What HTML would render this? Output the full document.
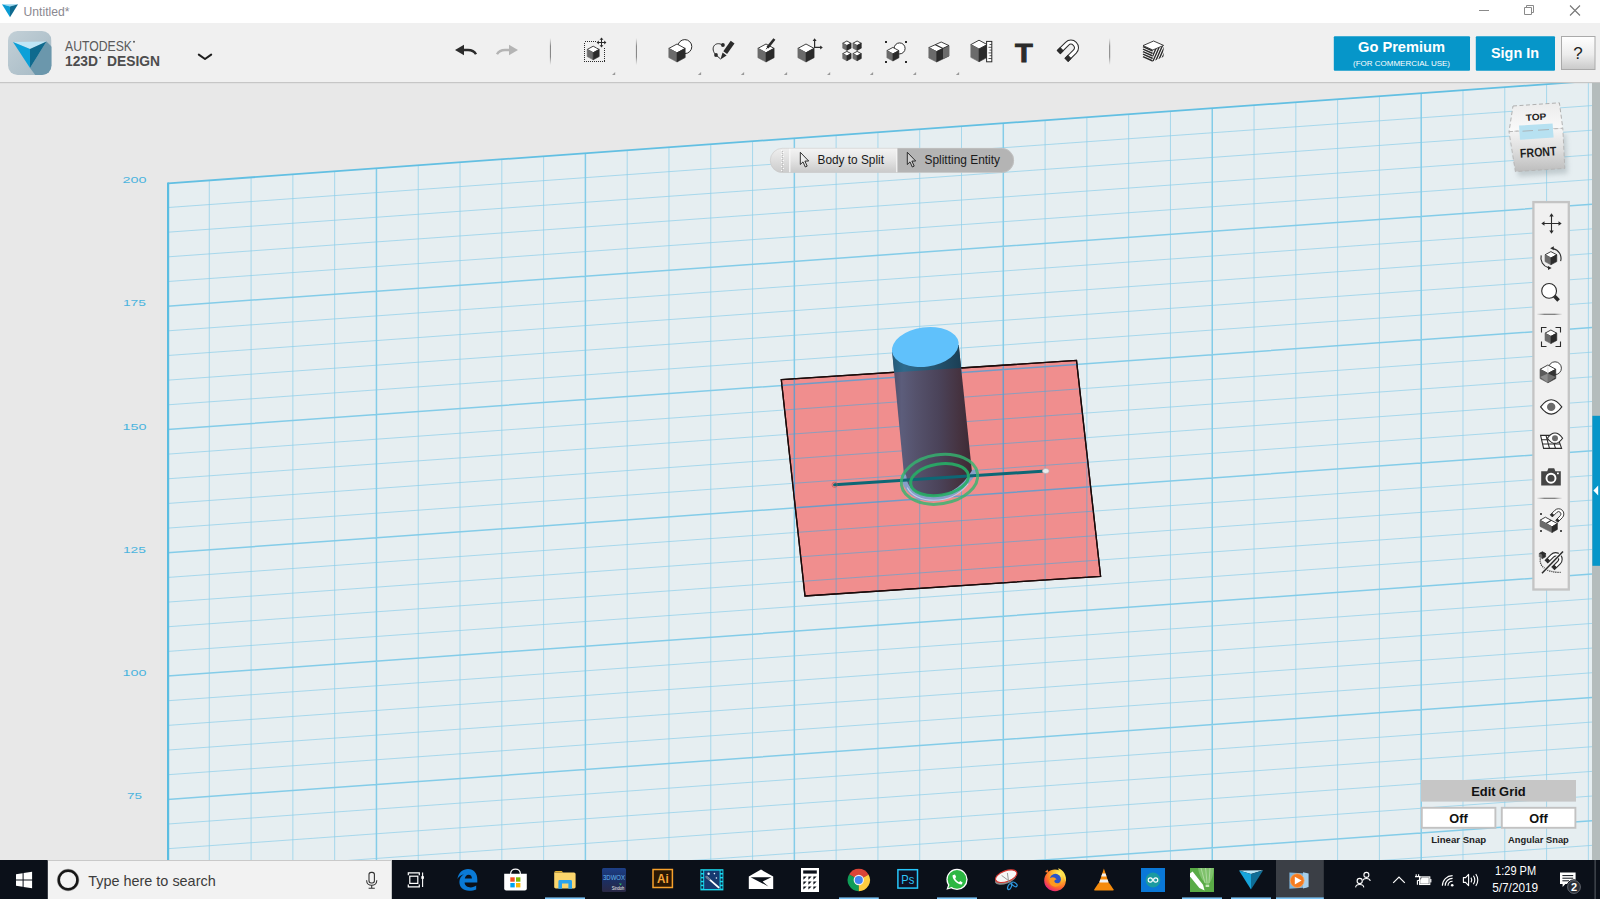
<!DOCTYPE html>
<html lang="en"><head><meta charset="utf-8"><title>Untitled* - Autodesk 123D Design</title>
<style>
html,body{margin:0;padding:0;background:#fff;overflow:hidden;}
body{width:1600px;height:899px;position:relative;font-family:"Liberation Sans",sans-serif;}
svg{position:absolute;left:0;top:0;display:block;}
text{white-space:pre;}
</style></head><body>
<svg width="1600" height="899" viewBox="0 0 1600 899">
<rect x="0" y="83" width="1600" height="777" fill="#e8e8e8"/>
<polygon points="167.50,182.90 1592.00,80.91 1592.00,860.00 167.50,860.00" fill="#e6eef1" />
<path d="M209.29,179.91V860M251.08,176.92V860M292.87,173.92V860M334.66,170.93V860M418.24,164.95V860M460.03,161.95V860M501.82,158.96V860M543.61,155.97V860M627.19,149.99V860M668.98,146.99V860M710.77,144.00V860M752.56,141.01V860M836.14,135.03V860M877.93,132.03V860M919.72,129.04V860M961.51,126.05V860M1045.09,120.06V860M1086.88,117.07V860M1128.67,114.08V860M1170.46,111.09V860M1254.04,105.10V860M1295.83,102.11V860M1337.62,99.12V860M1379.41,96.13V860M1462.99,90.14V860M1504.78,87.15V860M1546.57,84.16V860M1588.36,81.17V860M167.50,207.56L1592.00,105.57M167.50,232.22L1592.00,130.23M167.50,256.88L1592.00,154.89M167.50,281.54L1592.00,179.55M167.50,330.86L1592.00,228.87M167.50,355.52L1592.00,253.53M167.50,380.18L1592.00,278.19M167.50,404.84L1592.00,302.85M167.50,454.16L1592.00,352.17M167.50,478.82L1592.00,376.83M167.50,503.48L1592.00,401.49M167.50,528.14L1592.00,426.15M167.50,577.46L1592.00,475.47M167.50,602.12L1592.00,500.13M167.50,626.78L1592.00,524.79M167.50,651.44L1592.00,549.45M167.50,700.76L1592.00,598.77M167.50,725.42L1592.00,623.43M167.50,750.08L1592.00,648.09M167.50,774.74L1592.00,672.75M167.50,824.06L1592.00,722.07M167.50,848.72L1592.00,746.73M167.50,873.38L1592.00,771.39M167.50,898.04L1592.00,796.05M167.50,947.36L1592.00,845.37M167.50,972.02L1592.00,870.03M167.50,996.68L1592.00,894.69" stroke="#8fcfe9" stroke-opacity="0.72" stroke-width="1" fill="none"/>
<path d="M376.45,167.94V860M585.40,152.98V860M794.35,138.02V860M1003.30,123.06V860M1212.25,108.10V860M1421.20,93.14V860M167.50,306.20L1592.00,204.21M167.50,429.50L1592.00,327.51M167.50,552.80L1592.00,450.81M167.50,676.10L1592.00,574.11M167.50,799.40L1592.00,697.41M167.50,922.70L1592.00,820.71" stroke="#84cce8" stroke-width="1.5" fill="none"/>
<path d="M1592.0,80.91L168.1,183.30" stroke="#62bfe2" stroke-width="1.8" fill="none"/>
<path d="M168.1,182.60V860" stroke="#5bbde1" stroke-width="2.2" fill="none"/>
<text x="134.4" y="182.9" font-family="'Liberation Sans', sans-serif" font-size="9.6" font-weight="normal" fill="#4bb4de" text-anchor="middle" textLength="24" lengthAdjust="spacingAndGlyphs" >200</text>
<text x="134.4" y="306.2" font-family="'Liberation Sans', sans-serif" font-size="9.6" font-weight="normal" fill="#4bb4de" text-anchor="middle" textLength="23" lengthAdjust="spacingAndGlyphs" >175</text>
<text x="134.4" y="429.5" font-family="'Liberation Sans', sans-serif" font-size="9.6" font-weight="normal" fill="#4bb4de" text-anchor="middle" textLength="24" lengthAdjust="spacingAndGlyphs" >150</text>
<text x="134.4" y="552.8" font-family="'Liberation Sans', sans-serif" font-size="9.6" font-weight="normal" fill="#4bb4de" text-anchor="middle" textLength="23" lengthAdjust="spacingAndGlyphs" >125</text>
<text x="134.4" y="676.1" font-family="'Liberation Sans', sans-serif" font-size="9.6" font-weight="normal" fill="#4bb4de" text-anchor="middle" textLength="24" lengthAdjust="spacingAndGlyphs" >100</text>
<text x="134.4" y="799.4" font-family="'Liberation Sans', sans-serif" font-size="9.6" font-weight="normal" fill="#4bb4de" text-anchor="middle" textLength="15" lengthAdjust="spacingAndGlyphs" >75</text>
<defs>
<clipPath id="planeclip"><polygon points="781.30,379.70 1076.50,360.40 1100.60,576.30 805.00,596.00" fill="#000" /></clipPath>
<linearGradient id="cylA" x1="0" y1="0" x2="1" y2="0">
<stop offset="0" stop-color="#4e4e6a"/><stop offset="0.12" stop-color="#5c5d7b"/><stop offset="0.3" stop-color="#55526c"/><stop offset="0.6" stop-color="#4a4258"/><stop offset="0.85" stop-color="#45323f"/><stop offset="1" stop-color="#3c2a34"/></linearGradient>
<linearGradient id="cylB" x1="0" y1="0" x2="1" y2="0">
<stop offset="0" stop-color="#245a78"/><stop offset="0.15" stop-color="#2e6a8c"/><stop offset="0.5" stop-color="#265672"/><stop offset="0.85" stop-color="#1b3f55"/><stop offset="1" stop-color="#17384b"/></linearGradient>
<linearGradient id="rim" x1="0" y1="0" x2="0" y2="1"><stop offset="0" stop-color="#7f95bb"/><stop offset="1" stop-color="#a9bfe0"/></linearGradient>

</defs>
<polygon points="781.30,379.70 1076.50,360.40 1100.60,576.30 805.00,596.00" fill="#f08e8e" stroke="#1a0a0a" stroke-width="1.3" stroke-linejoin="miter"/>
<g clip-path="url(#planeclip)"><path d="M752.56,350V600M836.14,350V600M877.93,350V600M919.72,350V600M961.51,350V600M1045.09,350V600M1086.88,350V600M770,361.70L1110,337.36M770,411.02L1110,386.68M770,435.68L1110,411.34M770,460.34L1110,436.00M770,485.00L1110,460.66M770,534.32L1110,509.98M770,558.98L1110,534.64M770,583.64L1110,559.30M770,608.30L1110,583.96M770,657.62L1110,633.28M770,682.28L1110,657.94" stroke="#4fa6d8" stroke-opacity=".6" stroke-width="1" fill="none"/><path d="M794.35,350V600M1003.30,350V600M770,386.36L1110,362.02M770,509.66L1110,485.32M770,632.96L1110,608.62" stroke="#4f9fd6" stroke-opacity=".8" stroke-width="1.5" fill="none"/></g>
<polygon points="781.30,379.70 1076.50,360.40 1100.60,576.30 805.00,596.00" fill="none" stroke="#1a0a0a" stroke-width="1.3"/>
<path d="M892,350 L904.3,478 C 907,499 950,506.5 972.2,474 L958.7,345 Z" fill="url(#cylA)"/>
<clipPath id="aboveplane"><polygon points="700,300 1200,300 1200,352.3 700,385"/></clipPath>
<path d="M892,350 L904.3,478 C 907,499 950,506.5 972.2,474 L958.7,345 Z" fill="url(#cylB)" clip-path="url(#aboveplane)"/>
<path d="M903.9,476.5 C 905,503 951,511 974,472" stroke="#879fc8" stroke-width="5" fill="none" stroke-linecap="round"/>
<path d="M907.5,488 C 915,503 950,507 968,484" stroke="#c4d4ee" stroke-width="1.2" fill="none" stroke-linecap="round" opacity=".85"/>
<path d="M834.6,484.8 L1045.6,471" stroke="#0d6775" stroke-width="3" fill="none" stroke-linecap="round"/>
<ellipse cx="834.6" cy="484.8" rx="2.6" ry="2.6" fill="none" stroke="#c0504d" stroke-width="0.6"/>
<ellipse cx="1045.8" cy="471" rx="3.4" ry="2.5" fill="#e9ecef" stroke="#b9a7a7" stroke-width="0.7"/>
<g transform="rotate(-9 939.5 479.3)"><ellipse cx="939.5" cy="479.3" rx="38.5" ry="24.6" fill="none" stroke="#35b46f" stroke-opacity=".82" stroke-width="3"/><ellipse cx="939.5" cy="479.6" rx="29.2" ry="15.6" fill="none" stroke="#27ae66" stroke-opacity=".9" stroke-width="3"/></g>
<ellipse cx="925.3" cy="347" rx="33.6" ry="19.6" transform="rotate(-8 925.3 347)" fill="#60c1fb"/>
<defs>
<linearGradient id="sepg" x1="0" y1="0" x2="0" y2="1"><stop offset="0" stop-color="#8a8a8a" stop-opacity="0"/><stop offset="0.3" stop-color="#7d7d7d" stop-opacity=".9"/><stop offset="0.7" stop-color="#7d7d7d" stop-opacity=".9"/><stop offset="1" stop-color="#8a8a8a" stop-opacity="0"/></linearGradient>
<linearGradient id="logobg" x1="0" y1="0" x2="1" y2="1"><stop offset="0" stop-color="#c3d0d7"/><stop offset="1" stop-color="#a5b9c4"/></linearGradient>
<linearGradient id="helpg" x1="0" y1="0" x2="0" y2="1"><stop offset="0" stop-color="#ffffff"/><stop offset="0.55" stop-color="#ececec"/><stop offset="1" stop-color="#c9c9c9"/></linearGradient>
<clipPath id="logoclip"><rect x="8" y="31" width="43.5" height="44" rx="9.5"/></clipPath>
</defs>
<rect x="0" y="0" width="1600" height="23" fill="#ffffff"/>
<polygon points="2,4.2 18,4.2 10,6.4" fill="#9ad9f2"/><polygon points="2,4.2 10,6.4 10,17.2" fill="#0a9bd3"/><polygon points="18,4.2 10,6.4 10,17.2" fill="#0e6a8f"/>
<text x="23.5" y="15.6" font-family="'Liberation Sans', sans-serif" font-size="12" font-weight="normal" fill="#8a8890" text-anchor="start" textLength="46" lengthAdjust="spacingAndGlyphs" >Untitled*</text>
<path d="M1479,10.5H1489" stroke="#8a8a8a" stroke-width="1"/>
<path d="M1524.5,7.5H1531.5V14.5H1524.5Z M1526.5,7.5V5.5H1533.5V12.5H1531.5" stroke="#8a8a8a" stroke-width="1" fill="none"/>
<path d="M1570,5.5L1580,15.5M1580,5.5L1570,15.5" stroke="#777" stroke-width="1.1" fill="none"/>
<rect x="0" y="23" width="1600" height="59.5" fill="#f0f0f0"/>
<rect x="0" y="82" width="1600" height="1.2" fill="#c6c6c6"/>
<g clip-path="url(#logoclip)"><rect x="8" y="31" width="43.5" height="44" fill="url(#logobg)"/><polygon points="46.5,41.5 52,47 52,76 36,76 30,68" fill="#6b97ac"/></g>
<polygon points="13,42 46.5,41.5 30,49" fill="#bfe6f6"/><polygon points="13,42 30,49 30,68" fill="#0ba0d8"/><polygon points="46.5,41.5 30,49 30,68" fill="#0f6a8e"/>
<text x="65" y="50.6" font-family="'Liberation Sans', sans-serif" font-size="14.6" font-weight="normal" fill="#5a5a5a" text-anchor="start" textLength="67" lengthAdjust="spacingAndGlyphs" >AUTODESK</text>
<circle cx="134" cy="41.7" r="1" fill="#595959"/>
<text x="65" y="66" font-family="'Liberation Sans', sans-serif" font-size="14.4" font-weight="bold" fill="#4d4d4d" text-anchor="start" textLength="33" lengthAdjust="spacingAndGlyphs" >123D</text>
<circle cx="100.2" cy="57.6" r="0.9" fill="#4d4d4d"/>
<text x="107" y="66" font-family="'Liberation Sans', sans-serif" font-size="14.4" font-weight="bold" fill="#4d4d4d" text-anchor="start" textLength="53" lengthAdjust="spacingAndGlyphs" >DESIGN</text>
<path d="M198.8,54.6L205,59L211.2,54.6" stroke="#1e1e1e" stroke-width="2" fill="none" stroke-linecap="round" stroke-linejoin="round"/>
<polygon points="455,50 464,44.8 464,55.2" fill="#2b2b2b"/><path d="M463.5,50 H468 C 472,50 474.5,51.5 476,54.3" stroke="#2b2b2b" stroke-width="2.4" fill="none"/>
<polygon points="518,50 509,44.8 509,55.2" fill="#b4b4b4"/><path d="M509.5,50 H505 C 501,50 498.5,51.5 497,54.3" stroke="#b4b4b4" stroke-width="2.4" fill="none"/>
<rect x="549.9" y="38" width="1.1" height="27" fill="url(#sepg)"/>
<rect x="635.9" y="38" width="1.1" height="27" fill="url(#sepg)"/>
<rect x="1109.1" y="38" width="1.1" height="27" fill="url(#sepg)"/>
<rect x="584.5" y="41.5" width="20" height="20" fill="none" stroke="#2b2b2b" stroke-width="1" stroke-dasharray="1 1" shape-rendering="crispEdges"/>
<polygon points="593.20,46.20 599.20,49.44 593.20,52.68 587.20,49.44" fill="#fff" stroke="#2b2b2b" stroke-width="0.9" stroke-linejoin="round"/><polygon points="587.20,49.44 593.20,52.68 593.20,59.80 587.20,56.56" fill="#6b6b6b" stroke="#6b6b6b" stroke-width="0.6" stroke-linejoin="round"/><polygon points="593.20,52.68 599.20,49.44 599.20,56.56 593.20,59.80" fill="#2b2b2b" stroke="#2b2b2b" stroke-width="0.6" stroke-linejoin="round"/>
<rect x="596.5" y="37.5" width="10" height="10" fill="#f0f0f0"/>
<path d="M601.5,38.2V46.8M597.2,42.5H605.8" stroke="#2b2b2b" stroke-width="1"/><path d="M601.5,37.6l1.9,2.2h-3.8zM601.5,47.4l1.9,-2.2h-3.8zM596.6,42.5l2.2,-1.9v3.8zM606.4,42.5l-2.2,-1.9v3.8z" fill="#2b2b2b"/>
<polygon points="615.2,72.0 615.2,75.0 612.0,75.0" fill="#9a9a9a"/>
<polygon points="701.1,72.0 701.1,75.0 697.9,75.0" fill="#9a9a9a"/>
<polygon points="744.1,72.0 744.1,75.0 740.9,75.0" fill="#9a9a9a"/>
<polygon points="787.1,72.0 787.1,75.0 783.9,75.0" fill="#9a9a9a"/>
<polygon points="830.2,72.0 830.2,75.0 827.0,75.0" fill="#9a9a9a"/>
<polygon points="873.1,72.0 873.1,75.0 869.9,75.0" fill="#9a9a9a"/>
<polygon points="916.1,72.0 916.1,75.0 912.9,75.0" fill="#9a9a9a"/>
<polygon points="959.1,72.0 959.1,75.0 955.9,75.0" fill="#9a9a9a"/>
<circle cx="684.8" cy="46.6" r="7" fill="#fff" stroke="#2b2b2b" stroke-width="1"/>
<polygon points="677.00,44.00 685.20,48.43 677.00,52.86 668.80,48.43" fill="#fff" stroke="#2b2b2b" stroke-width="0.9" stroke-linejoin="round"/><polygon points="668.80,48.43 677.00,52.86 677.00,62.00 668.80,57.57" fill="#6b6b6b" stroke="#6b6b6b" stroke-width="0.6" stroke-linejoin="round"/><polygon points="677.00,52.86 685.20,48.43 685.20,57.57 677.00,62.00" fill="#2b2b2b" stroke="#2b2b2b" stroke-width="0.6" stroke-linejoin="round"/>
<path d="M722.6,45 C 715,40.5 709.5,48.5 716,55 L 720.6,59" stroke="#2b2b2b" stroke-width="1" fill="none"/>
<circle cx="722.9" cy="45" r="1.9" fill="#2b2b2b"/><circle cx="716" cy="55" r="1.9" fill="#2b2b2b"/>
<path d="M732.6,42.2 L725.2,52.6" stroke="#2b2b2b" stroke-width="4.6" stroke-linecap="butt"/>
<path d="M722.6,52.6 l4,2.9 -6.2,3.9 z" fill="#2b2b2b"/>
<polygon points="766.00,44.00 774.10,48.37 766.00,52.75 757.90,48.37" fill="#fff" stroke="#2b2b2b" stroke-width="0.9" stroke-linejoin="round"/><polygon points="757.90,48.37 766.00,52.75 766.00,62.00 757.90,57.63" fill="#6b6b6b" stroke="#6b6b6b" stroke-width="0.6" stroke-linejoin="round"/><polygon points="766.00,52.75 774.10,48.37 774.10,57.63 766.00,62.00" fill="#2b2b2b" stroke="#2b2b2b" stroke-width="0.6" stroke-linejoin="round"/>
<path d="M774.4,39 L767.5,47.6" stroke="#2b2b2b" stroke-width="2.6" stroke-linecap="butt"/><path d="M767.8,47 l-1.6,2.2" stroke="#2b2b2b" stroke-width="1"/>
<polygon points="806.00,44.00 814.10,48.37 806.00,52.75 797.90,48.37" fill="#fff" stroke="#2b2b2b" stroke-width="0.9" stroke-linejoin="round"/><polygon points="797.90,48.37 806.00,52.75 806.00,62.00 797.90,57.63" fill="#6b6b6b" stroke="#6b6b6b" stroke-width="0.6" stroke-linejoin="round"/><polygon points="806.00,52.75 814.10,48.37 814.10,57.63 806.00,62.00" fill="#2b2b2b" stroke="#2b2b2b" stroke-width="0.6" stroke-linejoin="round"/>
<path d="M814.6,39.5V47.4H821.2" stroke="#2b2b2b" stroke-width="1.2" fill="none"/><path d="M814.6,38.3l2,2.6h-4zM822.8,47.4l-2.6,-2v4z" fill="#2b2b2b"/>
<polygon points="846.90,41.00 851.10,43.27 846.90,45.54 842.70,43.27" fill="#fff" stroke="#2b2b2b" stroke-width="0.9" stroke-linejoin="round"/><polygon points="842.70,43.27 846.90,45.54 846.90,50.40 842.70,48.13" fill="#6b6b6b" stroke="#6b6b6b" stroke-width="0.6" stroke-linejoin="round"/><polygon points="846.90,45.54 851.10,43.27 851.10,48.13 846.90,50.40" fill="#2b2b2b" stroke="#2b2b2b" stroke-width="0.6" stroke-linejoin="round"/>
<polygon points="857.10,41.00 861.30,43.27 857.10,45.54 852.90,43.27" fill="#fff" stroke="#2b2b2b" stroke-width="0.9" stroke-linejoin="round"/><polygon points="852.90,43.27 857.10,45.54 857.10,50.40 852.90,48.13" fill="#6b6b6b" stroke="#6b6b6b" stroke-width="0.6" stroke-linejoin="round"/><polygon points="857.10,45.54 861.30,43.27 861.30,48.13 857.10,50.40" fill="#2b2b2b" stroke="#2b2b2b" stroke-width="0.6" stroke-linejoin="round"/>
<polygon points="846.90,51.40 851.10,53.67 846.90,55.94 842.70,53.67" fill="#fff" stroke="#2b2b2b" stroke-width="0.9" stroke-linejoin="round"/><polygon points="842.70,53.67 846.90,55.94 846.90,60.80 842.70,58.53" fill="#6b6b6b" stroke="#6b6b6b" stroke-width="0.6" stroke-linejoin="round"/><polygon points="846.90,55.94 851.10,53.67 851.10,58.53 846.90,60.80" fill="#2b2b2b" stroke="#2b2b2b" stroke-width="0.6" stroke-linejoin="round"/>
<polygon points="857.10,51.40 861.30,53.67 857.10,55.94 852.90,53.67" fill="#fff" stroke="#2b2b2b" stroke-width="0.9" stroke-linejoin="round"/><polygon points="852.90,53.67 857.10,55.94 857.10,60.80 852.90,58.53" fill="#6b6b6b" stroke="#6b6b6b" stroke-width="0.6" stroke-linejoin="round"/><polygon points="857.10,55.94 861.30,53.67 861.30,58.53 857.10,60.80" fill="#2b2b2b" stroke="#2b2b2b" stroke-width="0.6" stroke-linejoin="round"/>
<rect x="885" y="41" width="2" height="2" fill="#2b2b2b"/>
<rect x="905" y="41" width="2" height="2" fill="#2b2b2b"/>
<rect x="885" y="61" width="2" height="2" fill="#2b2b2b"/>
<rect x="905" y="61" width="2" height="2" fill="#2b2b2b"/>
<circle cx="899.6" cy="48.4" r="5.5" fill="#fff" stroke="#2b2b2b" stroke-width="1"/>
<polygon points="892.90,47.40 898.90,50.64 892.90,53.88 886.90,50.64" fill="#fff" stroke="#2b2b2b" stroke-width="0.9" stroke-linejoin="round"/><polygon points="886.90,50.64 892.90,53.88 892.90,61.00 886.90,57.76" fill="#6b6b6b" stroke="#6b6b6b" stroke-width="0.6" stroke-linejoin="round"/><polygon points="892.90,53.88 898.90,50.64 898.90,57.76 892.90,61.00" fill="#2b2b2b" stroke="#2b2b2b" stroke-width="0.6" stroke-linejoin="round"/>
<polygon points="928.80,47.60 941.20,42.00 949.00,45.60 936.60,51.60" fill="#fff" stroke="#2b2b2b" stroke-width="0.9" stroke-linejoin="round"/><path d="M935.4,44.7 L943,48.5" stroke="#2b2b2b" stroke-width="1.1"/><polygon points="928.80,47.60 936.60,51.60 936.60,62.00 928.80,58.00" fill="#6b6b6b" stroke="#6b6b6b" stroke-width="0.6"/><polygon points="936.60,51.60 949.00,45.60 949.00,56.00 936.60,62.00" fill="#2b2b2b" stroke="#2b2b2b" stroke-width="0.6"/><polygon points="943.00,48.70 949.00,45.80 949.00,56.00 943.00,59.00" fill="#6b6b6b" />
<polygon points="979.00,40.20 987.20,44.63 979.00,49.06 970.80,44.63" fill="#fff" stroke="#2b2b2b" stroke-width="0.9" stroke-linejoin="round"/><polygon points="970.80,44.63 979.00,49.06 979.00,61.80 970.80,57.37" fill="#6b6b6b" stroke="#6b6b6b" stroke-width="0.6" stroke-linejoin="round"/><polygon points="979.00,49.06 987.20,44.63 987.20,57.37 979.00,61.80" fill="#2b2b2b" stroke="#2b2b2b" stroke-width="0.6" stroke-linejoin="round"/>
<rect x="986.6" y="41.4" width="5.2" height="20.4" fill="#fff" stroke="#2b2b2b" stroke-width="1"/>
<path d="M989.5,44.5h2.3M988.5,47.3h3.3M989.5,50.1h2.3M988.5,52.9h3.3M989.5,55.7h2.3M988.5,58.5h3.3" stroke="#2b2b2b" stroke-width="0.8"/>
<text x="1024" y="62" font-family="'Liberation Sans', sans-serif" font-size="26.6" font-weight="bold" fill="#2b2b2b" text-anchor="middle" textLength="17.8" lengthAdjust="spacingAndGlyphs" stroke="#2b2b2b" stroke-width="0.9">T</text>
<g transform="translate(1070.2,48.4) rotate(45) scale(1.0)"><path d="M-7.6,10.5V-1A7.6,7.6 0 0 1 7.6,-1V10.5H3.4V-1A3.4,3.4 0 0 0 -3.4,-1V10.5Z" fill="#fff" stroke="#2b2b2b" stroke-width="1"/><rect x="-7.6" y="6.6" width="4.2" height="3.9" fill="#2b2b2b" stroke="#2b2b2b" stroke-width="1"/><rect x="3.4" y="6.6" width="4.2" height="3.9" fill="#2b2b2b" stroke="#2b2b2b" stroke-width="1"/></g>
<polygon points="1143.00,45.60 1152.80,50.00 1152.80,61.40 1143.00,57.00" fill="#fff" /><path d="M1143,46.6 L1152.8,51.0" stroke="#2b2b2b" stroke-width="1.5"/><path d="M1143,49.1 L1152.8,53.5" stroke="#2b2b2b" stroke-width="1.5"/><path d="M1143,51.6 L1152.8,56.0" stroke="#2b2b2b" stroke-width="1.5"/><path d="M1143,54.1 L1152.8,58.5" stroke="#2b2b2b" stroke-width="1.5"/><path d="M1143,56.6 L1152.8,61.0" stroke="#2b2b2b" stroke-width="1.5"/><polygon points="1152.80,50.00 1163.60,45.40 1163.60,56.80 1152.80,61.40" fill="#fff" /><clipPath id="matr"><polygon points="1152.8,50 1163.6,45.4 1163.6,56.8 1152.8,61.4"/></clipPath><g clip-path="url(#matr)"><path d="M1150.0,62 L1158.0,44" stroke="#2b2b2b" stroke-width="1.4"/><path d="M1152.6,62 L1160.6,44" stroke="#2b2b2b" stroke-width="1.4"/><path d="M1155.2,62 L1163.2,44" stroke="#2b2b2b" stroke-width="1.4"/><path d="M1157.8,62 L1165.8,44" stroke="#2b2b2b" stroke-width="1.4"/><path d="M1160.4,62 L1168.4,44" stroke="#2b2b2b" stroke-width="1.4"/><path d="M1163.0,62 L1171.0,44" stroke="#2b2b2b" stroke-width="1.4"/><path d="M1165.6,62 L1173.6,44" stroke="#2b2b2b" stroke-width="1.4"/></g><polygon points="1143.00,45.60 1153.60,41.00 1163.60,45.40 1152.80,50.00" fill="#fff" stroke="#2b2b2b" stroke-width="0.9" stroke-linejoin="round"/>
<rect x="1333.8" y="36.2" width="136.2" height="34.6" rx="1" fill="#0696c9"/>
<text x="1401.5" y="52" font-family="'Liberation Sans', sans-serif" font-size="15" font-weight="bold" fill="#fff" text-anchor="middle" textLength="87" lengthAdjust="spacingAndGlyphs" >Go Premium</text>
<text x="1401.5" y="66" font-family="'Liberation Sans', sans-serif" font-size="7.5" font-weight="normal" fill="#fff" text-anchor="middle" textLength="97" lengthAdjust="spacingAndGlyphs" >(FOR COMMERCIAL USE)</text>
<rect x="1475.8" y="36.2" width="79.2" height="34.6" rx="1" fill="#0696c9"/>
<text x="1515" y="58" font-family="'Liberation Sans', sans-serif" font-size="15" font-weight="bold" fill="#fff" text-anchor="middle" textLength="48" lengthAdjust="spacingAndGlyphs" >Sign In</text>
<rect x="1561.5" y="36.5" width="33.5" height="33" fill="url(#helpg)" stroke="#aaaaaa" stroke-width="1"/>
<text x="1578" y="59" font-family="'Liberation Sans', sans-serif" font-size="17" font-weight="normal" fill="#222" text-anchor="middle" >?</text>
<rect x="1592" y="83" width="8" height="777" fill="#b4bcbc"/><rect x="1592.4" y="415.8" width="7.6" height="150" fill="#0696c9"/><polygon points="1593.4,490.5 1598.2,485.5 1598.2,495.5" fill="#fff"/>
<defs><linearGradient id="pillg" x1="0" y1="0" x2="0" y2="1"><stop offset="0" stop-color="#f4f4f4"/><stop offset="0.5" stop-color="#e3e3e3"/><stop offset="1" stop-color="#c9c9c9"/></linearGradient>
<linearGradient id="pillh" x1="0" y1="0" x2="0" y2="1"><stop offset="0" stop-color="#efefef"/><stop offset="0.5" stop-color="#dedede"/><stop offset="1" stop-color="#cbcbcb"/></linearGradient>
<clipPath id="pillc"><rect x="770" y="148" width="244" height="24.8" rx="12.4"/></clipPath></defs><g clip-path="url(#pillc)"><rect x="770" y="148" width="20" height="24.8" fill="url(#pillh)"/><rect x="790" y="148" width="107" height="24.8" fill="url(#pillg)"/><rect x="897" y="148" width="118" height="24.8" fill="#b4b4b4"/><rect x="789.2" y="148" width="1.2" height="24.8" fill="#fafafa"/><rect x="896.2" y="148" width="1.2" height="24.8" fill="#f6f6f6"/></g><path d="M781.5,150V172" stroke="#fbfbfb" stroke-width="1" stroke-dasharray="1 3" shape-rendering="crispEdges"/><path d="M783.5,152V172" stroke="#fbfbfb" stroke-width="1" stroke-dasharray="1 3" shape-rendering="crispEdges"/><path d="M782.5,151V172" stroke="#bdbdbd" stroke-width="1" stroke-dasharray="1 1" shape-rendering="crispEdges"/><rect x="770.3" y="148.3" width="243.4" height="24.2" rx="12.1" fill="none" stroke="#c9c9c9" stroke-width="0.6"/><path d="M800.3,152.3 v12.2 l2.7,-2.6 l2.3,5.1 l1.9,-0.9 l-2.3,-5 l3.8,-0.1 z" fill="#fff" fill-opacity=".35" stroke="#1c1c1c" stroke-width="0.9" stroke-linejoin="round"/><path d="M907.3,152.3 v12.2 l2.7,-2.6 l2.3,5.1 l1.9,-0.9 l-2.3,-5 l3.8,-0.1 z" fill="#fff" fill-opacity=".35" stroke="#1c1c1c" stroke-width="0.9" stroke-linejoin="round"/><text x="817.5" y="163.8" font-family="'Liberation Sans', sans-serif" font-size="12.3" font-weight="normal" fill="#1a1a1a" text-anchor="start" textLength="66.5" lengthAdjust="spacingAndGlyphs" >Body to Split</text><text x="924.5" y="163.8" font-family="'Liberation Sans', sans-serif" font-size="12.3" font-weight="normal" fill="#1a1a1a" text-anchor="start" textLength="75.5" lengthAdjust="spacingAndGlyphs" >Splitting Entity</text>
<defs><linearGradient id="vcf" x1="0" y1="0" x2="0" y2="1"><stop offset="0" stop-color="#f6f6f6"/><stop offset="0.5" stop-color="#dedede"/><stop offset="1" stop-color="#bdbdbd"/></linearGradient>
<linearGradient id="vct" x1="0" y1="0" x2="0" y2="1"><stop offset="0" stop-color="#ececec"/><stop offset="1" stop-color="#fafafa"/></linearGradient>
<filter id="vcsh" x="-20%" y="-20%" width="140%" height="150%"><feGaussianBlur stdDeviation="2.5"/></filter></defs><polygon points="1512.00,137.70 1565.80,134.30 1567.80,173.40 1518.40,176.60" fill="#7d8a90" filter="url(#vcsh)" opacity=".35"/><polygon points="1513.00,106.00 1559.40,102.80 1562.80,128.30 1509.00,131.70" fill="url(#vct)" stroke="#a9a9a9" stroke-width="0.9" stroke-dasharray="4 2.5"/><polygon points="1509.00,131.70 1562.80,128.30 1564.80,168.40 1515.40,171.60" fill="url(#vcf)" stroke="#b3b3b3" stroke-width="0.9" stroke-dasharray="4 2.5"/><polygon points="1519.00,125.60 1552.60,123.40 1553.60,137.60 1520.00,139.80" fill="#b7e1f1" /><path d="M1522.5,131.2L1533,130.5M1538,130.2L1549,129.5" stroke="#aab4b8" stroke-width="1"/><g transform="rotate(-4 1536 117)"><text x="1536" y="120.2" font-family="'Liberation Sans', sans-serif" font-size="9.2" font-weight="bold" fill="#222" text-anchor="middle" textLength="20.5" lengthAdjust="spacingAndGlyphs" >TOP</text></g><g transform="rotate(-4 1538 152)"><text x="1538.2" y="156.6" font-family="'Liberation Sans', sans-serif" font-size="12.6" font-weight="bold" fill="#1f1f1f" text-anchor="middle" textLength="36.5" lengthAdjust="spacingAndGlyphs" >FRONT</text></g>
<rect x="1533.4" y="202.1" width="35.4" height="387.4" fill="#f0f0f0" stroke="#c4c4c4" stroke-width="2.3"/><defs><linearGradient id="nsep" x1="0" y1="0" x2="1" y2="0"><stop offset="0" stop-color="#777" stop-opacity="0"/><stop offset="0.3" stop-color="#6a6a6a" stop-opacity=".9"/><stop offset="0.7" stop-color="#6a6a6a" stop-opacity=".9"/><stop offset="1" stop-color="#777" stop-opacity="0"/></linearGradient></defs><rect x="1536.5" y="313.7" width="26" height="1.2" fill="url(#nsep)"/><rect x="1536.5" y="497.7" width="26" height="1.2" fill="url(#nsep)"/><path d="M1551.5,215.5V231.5M1543.5,223.5H1559.5" stroke="#2b2b2b" stroke-width="1.1"/><path d="M1551.5,213.3l2.2,3.2h-4.4zM1551.5,233.7l2.2,-3.2h-4.4zM1541.3,223.5l3.2,-2.2v4.4zM1561.7,223.5l-3.2,-2.2v4.4z" fill="#2b2b2b"/><polygon points="1550.90,251.60 1556.80,254.79 1550.90,257.97 1545.00,254.79" fill="#fff" stroke="#2b2b2b" stroke-width="0.9" stroke-linejoin="round"/><polygon points="1545.00,254.79 1550.90,257.97 1550.90,264.80 1545.00,261.61" fill="#6b6b6b" stroke="#6b6b6b" stroke-width="0.6" stroke-linejoin="round"/><polygon points="1550.90,257.97 1556.80,254.79 1556.80,261.61 1550.90,264.80" fill="#2b2b2b" stroke="#2b2b2b" stroke-width="0.6" stroke-linejoin="round"/><path d="M1553.2,248.6 A10,10 0 0 1 1560.6,261.2" stroke="#2b2b2b" stroke-width="1.1" fill="none"/><path d="M1550.2,248.3l3.6,-2v4z" fill="#2b2b2b"/><path d="M1548.4,267.6 A10,10 0 0 1 1541.2,255.4" stroke="#2b2b2b" stroke-width="1.1" fill="none"/><path d="M1551.6,267.9l-3.6,-2v4z" fill="#2b2b2b"/><path d="M1554.3,296 L1558.6,300.4" stroke="#2b2b2b" stroke-width="3.6"/><circle cx="1549.1" cy="290.9" r="7.4" fill="#fff" stroke="#2b2b2b" stroke-width="1.1"/><path d="M1541.5,332.5V327.5H1546.5M1555.5,327.5H1560.5V332.5M1560.5,341.5V346.5H1555.5M1546.5,346.5H1541.5V341.5" stroke="#2b2b2b" stroke-width="1.1" fill="none"/><polygon points="1550.90,330.00 1556.80,333.19 1550.90,336.37 1545.00,333.19" fill="#fff" stroke="#2b2b2b" stroke-width="0.9" stroke-linejoin="round"/><polygon points="1545.00,333.19 1550.90,336.37 1550.90,343.60 1545.00,340.41" fill="#6b6b6b" stroke="#6b6b6b" stroke-width="0.6" stroke-linejoin="round"/><polygon points="1550.90,336.37 1556.80,333.19 1556.80,340.41 1550.90,343.60" fill="#2b2b2b" stroke="#2b2b2b" stroke-width="0.6" stroke-linejoin="round"/><circle cx="1555" cy="368.2" r="6.4" fill="#fff" stroke="#2b2b2b" stroke-width="0.9"/><polygon points="1547.90,365.00 1555.80,369.27 1547.90,373.53 1540.00,369.27" fill="#fff" stroke="#2b2b2b" stroke-width="0.9" stroke-linejoin="round"/><polygon points="1540.00,369.27 1547.90,373.53 1547.90,382.80 1540.00,378.53" fill="#5a5a5a" stroke="#5a5a5a" stroke-width="0.6" stroke-linejoin="round"/><polygon points="1547.90,373.53 1555.80,369.27 1555.80,378.53 1547.90,382.80" fill="#333" stroke="#333" stroke-width="0.6" stroke-linejoin="round"/><polygon points="1540.00,377.00 1547.90,373.60 1547.90,382.80" fill="#8c8c8c" /><polygon points="1555.80,377.00 1547.90,373.60 1547.90,382.80" fill="#707070" /><path d="M1547.9,365.6V373.6" stroke="#d0d0d0" stroke-width="0.7"/><path d="M1540.6000000000001,406.9 Q1551.2,392.5 1561.8,406.9 Q1551.2,421.29999999999995 1540.6000000000001,406.9Z" fill="#fff" stroke="#2b2b2b" stroke-width="1.1"/><circle cx="1551.2" cy="406.9" r="4.2" fill="#6b6b6b"/><polygon points="1540.60,435.40 1557.00,435.40 1561.60,448.40 1543.60,448.40" fill="#fff" stroke="#2b2b2b" stroke-width="1.1"/><path d="M1541.6,439.7H1558.5M1542.6,444H1560M1546,435.4L1549.5,448.4M1551.5,435.4L1555.5,448.4" stroke="#2b2b2b" stroke-width="1.1"/><path d="M1547.4,438.2 Q1555,427.8 1562.6,438.2 Q1555,448.59999999999997 1547.4,438.2Z" fill="#fff" stroke="#2b2b2b" stroke-width="1.1"/><circle cx="1555" cy="438.2" r="3" fill="#6b6b6b"/><path d="M1541.2,471.2H1547.2L1548.4,468.2H1554.2L1555.4,471.2H1560.8V485.6H1541.2Z" fill="#444"/><circle cx="1551" cy="478.2" r="4.5" fill="none" stroke="#fff" stroke-width="1.9"/><rect x="1557" y="472.6" width="1.8" height="1.6" fill="#fff"/><rect x="1540.1" y="513.1" width="1.8" height="1.8" fill="#2b2b2b"/><rect x="1540.1" y="530.1" width="1.8" height="1.8" fill="#2b2b2b"/><rect x="1560.1" y="530.1" width="1.8" height="1.8" fill="#2b2b2b"/><polygon points="1540.00,520.20 1545.40,517.20 1557.40,523.60 1552.00,526.80" fill="#fff" stroke="#2b2b2b" stroke-width="0.9" stroke-linejoin="round"/><path d="M1551.4,520.3L1546,523.4" stroke="#2b2b2b" stroke-width="1.1"/><polygon points="1540.00,520.20 1552.00,526.80 1552.00,532.60 1540.00,526.40" fill="#6b6b6b" stroke="#6b6b6b" stroke-width="0.6"/><polygon points="1552.00,526.80 1557.40,523.60 1557.40,529.40 1552.00,532.60" fill="#2b2b2b" stroke="#2b2b2b" stroke-width="0.6"/><g transform="translate(1558.6,514) rotate(45) scale(0.72)"><path d="M-7.3,9V0A7.3,7.3 0 0 1 7.3,0V9H3.3V0A3.3,3.3 0 0 0 -3.3,0V9Z" fill="#fff" stroke="#2b2b2b" stroke-width="1.2"/><rect x="-7.3" y="5.4" width="4" height="3.6" fill="#2b2b2b"/><rect x="3.3" y="5.4" width="4" height="3.6" fill="#2b2b2b"/></g><polygon points="1542.40,551.80 1545.60,553.53 1542.40,555.26 1539.20,553.53" fill="#2b2b2b" stroke="#2b2b2b" stroke-width="0.9" stroke-linejoin="round"/><polygon points="1539.20,553.53 1542.40,555.26 1542.40,558.60 1539.20,556.87" fill="#6b6b6b" stroke="#6b6b6b" stroke-width="0.6" stroke-linejoin="round"/><polygon points="1542.40,555.26 1545.60,553.53 1545.60,556.87 1542.40,558.60" fill="#2b2b2b" stroke="#2b2b2b" stroke-width="0.6" stroke-linejoin="round"/><path d="M1540.3,558.5 C1539,566 1546,572.6 1560.6,572.4" stroke="#2b2b2b" stroke-width="1.3" fill="none" stroke-dasharray="1.1 1"/><g transform="translate(1555.6,559.2) rotate(45) scale(0.9)"><path d="M-7.3,9V0A7.3,7.3 0 0 1 7.3,0V9H3.3V0A3.3,3.3 0 0 0 -3.3,0V9Z" fill="#fff" stroke="#2b2b2b" stroke-width="1.2"/><rect x="-7.3" y="5.4" width="4" height="3.6" fill="#2b2b2b"/><rect x="3.3" y="5.4" width="4" height="3.6" fill="#2b2b2b"/></g><path d="M1563,551.4L1542,573.2" stroke="#f0f0f0" stroke-width="3.2"/><path d="M1563,551.4L1542,573.2" stroke="#2b2b2b" stroke-width="1.5"/>
<rect x="1421" y="780" width="155" height="21.6" fill="#c6c6c6"/><text x="1498.4" y="795.8" font-family="'Liberation Sans', sans-serif" font-size="13.4" font-weight="bold" fill="#111" text-anchor="middle" textLength="54.5" lengthAdjust="spacingAndGlyphs" >Edit Grid</text><rect x="1421.8" y="807.8" width="73.6" height="20" fill="#fff" stroke="#c2c2c2" stroke-width="1.9"/><rect x="1501.8" y="807.8" width="73.6" height="20" fill="#fff" stroke="#c2c2c2" stroke-width="1.9"/><text x="1458.5" y="822.6" font-family="'Liberation Sans', sans-serif" font-size="13.4" font-weight="bold" fill="#111" text-anchor="middle" textLength="18.4" lengthAdjust="spacingAndGlyphs" >Off</text><text x="1538.5" y="822.6" font-family="'Liberation Sans', sans-serif" font-size="13.4" font-weight="bold" fill="#111" text-anchor="middle" textLength="18.4" lengthAdjust="spacingAndGlyphs" >Off</text><text x="1431.2" y="842.8" font-family="'Liberation Sans', sans-serif" font-size="9.2" font-weight="bold" fill="#222" text-anchor="start" textLength="55" lengthAdjust="spacingAndGlyphs" >Linear Snap</text><text x="1508" y="842.8" font-family="'Liberation Sans', sans-serif" font-size="9.2" font-weight="bold" fill="#222" text-anchor="start" textLength="60.8" lengthAdjust="spacingAndGlyphs" >Angular Snap</text>
<rect x="0" y="860" width="1600" height="39" fill="#0b1019"/>
<rect x="47.8" y="860" width="344" height="39" fill="#f2f2f2"/><rect x="47.8" y="860" width="344" height="1" fill="#c9c9c9"/>
<path d="M16,874.2 L22.6,873.2 V879.5 H16Z M23.6,873 L32.1,871.8 V879.5 H23.6Z M16,880.5 H22.6 V886.8 L16,885.8Z M23.6,880.5 H32.1 V888.2 L23.6,887Z" fill="#fff"/>
<circle cx="68.1" cy="880" r="9.4" fill="none" stroke="#161616" stroke-width="2.7"/>
<circle cx="68.1" cy="880" r="10.9" fill="none" stroke="#777" stroke-width="0.6" opacity=".6"/>
<text x="88.2" y="885.7" font-family="'Liberation Sans', sans-serif" font-size="15" font-weight="normal" fill="#3c3c3c" text-anchor="start" textLength="127.5" lengthAdjust="spacingAndGlyphs" >Type here to search</text>
<rect x="369" y="872.4" width="5.4" height="10.6" rx="2.2" fill="none" stroke="#333" stroke-width="1.1"/><path d="M366.6,880.2 C366.6,887 376.8,887 376.8,880.2 M371.7,885.4V888 M368.6,888.2H374.8" fill="none" stroke="#333" stroke-width="1.1"/>
<path d="M408.3,875.2V872.8H419.3V875.2 M408.3,884.4V886.8H419.3V884.4" fill="none" stroke="#fff" stroke-width="1.2"/><rect x="409.8" y="876.2" width="8" height="7.2" fill="none" stroke="#fff" stroke-width="1.2"/><path d="M422.6,872.4V887" stroke="#fff" stroke-width="1.1"/><rect x="421.3" y="876.2" width="2.6" height="2.6" fill="#fff"/>
<path fill-rule="evenodd" d="M457.4,879 C458.4,872.6 462.8,869 468,869 C474,869 477.3,873.4 477.3,879.4 L477.3,882.6 L464.6,882.6 C464.8,886 467.8,887.4 470.6,887.4 C472.8,887.4 474.8,886.7 476.2,885.6 L476.2,889.4 C474.4,890.3 472,890.7 469.2,890.7 C463,890.7 459.4,887 459.4,882 C459.4,878.6 461,876 463.8,874.2 C461,874.8 458.8,876.6 457.4,879 Z M464.8,878.6 L471.9,878.6 C471.9,876.2 470.8,874.7 468.6,874.7 C466.4,874.7 465.1,876.5 464.8,878.6 Z" fill="#0a7ad6"/>
<path d="M510.6,874 C510.6,867.4 520.4,867.4 520.4,874" fill="none" stroke="#fff" stroke-width="1.2"/><path d="M504.2,873.8H526.8V888.6Q526.8,890.6 524.8,890.6H506.2Q504.2,890.6 504.2,888.6Z" fill="#fff"/><rect x="510.3" y="877.3" width="4.4" height="4.4" fill="#f25022"/><rect x="516" y="877.3" width="4.4" height="4.4" fill="#7fba00"/><rect x="510.3" y="883" width="4.4" height="4.4" fill="#00a4ef"/><rect x="516" y="883" width="4.4" height="4.4" fill="#ffb900"/>
<path d="M554.2,872.6Q554.2,871 555.8,871H561.6L563.4,872.6H554.2Z" fill="#e9b532"/><path d="M554.2,872.4H574Q575.6,872.4 575.6,874V887Q575.6,888.4 574,888.4H555.8Q554.2,888.4 554.2,887Z" fill="#fbd56c"/><path d="M558.4,888.8V881.4Q558.4,880 559.8,880H570.6Q572,880 572,881.4V888.8H568.4V883.4H562V888.8Z" fill="#2ba3ec"/>
<rect x="545" y="897.4" width="40" height="1.6" fill="#7cc4f5"/>
<defs><linearGradient id="wox" x1="0" y1="0" x2="0" y2="1"><stop offset="0" stop-color="#1d3f86"/><stop offset="0.5" stop-color="#1b2f63"/><stop offset="1" stop-color="#2a2845"/></linearGradient></defs>
<rect x="602" y="868" width="24" height="24" rx="1.5" fill="url(#wox)"/>
<text x="614" y="879.6" font-family="'Liberation Sans', sans-serif" font-size="6.4" font-weight="normal" fill="#62b7f0" text-anchor="middle" textLength="22" lengthAdjust="spacingAndGlyphs" >3DWOX</text>
<text x="618" y="889.6" font-family="'Liberation Sans', sans-serif" font-size="4.6" font-weight="normal" fill="#f0f0f0" text-anchor="middle" textLength="12.6" lengthAdjust="spacingAndGlyphs" >Sindoh</text>
<path d="M619,883.2l3,0.6-1.6,1.6z" fill="#2db36a"/>
<rect x="653" y="869.5" width="19.4" height="18" fill="#2a1703" stroke="#f7a12c" stroke-width="1.5"/>
<text x="662.8" y="883.2" font-family="'Liberation Sans', sans-serif" font-size="12.5" font-weight="bold" fill="#f9a73b" text-anchor="middle" textLength="11.6" lengthAdjust="spacingAndGlyphs" >Ai</text>
<rect x="700.4" y="869.2" width="23" height="21.2" fill="#19d7ee"/><rect x="704.2" y="870.6" width="15.4" height="18.4" fill="#173a70"/>
<rect x="701.3" y="870.6" width="1.9" height="2.4" fill="#0d2340"/><rect x="720.6" y="870.6" width="1.9" height="2.4" fill="#0d2340"/>
<rect x="701.3" y="874.5" width="1.9" height="2.4" fill="#0d2340"/><rect x="720.6" y="874.5" width="1.9" height="2.4" fill="#0d2340"/>
<rect x="701.3" y="878.4" width="1.9" height="2.4" fill="#0d2340"/><rect x="720.6" y="878.4" width="1.9" height="2.4" fill="#0d2340"/>
<rect x="701.3" y="882.3" width="1.9" height="2.4" fill="#0d2340"/><rect x="720.6" y="882.3" width="1.9" height="2.4" fill="#0d2340"/>
<rect x="701.3" y="886.2" width="1.9" height="2.4" fill="#0d2340"/><rect x="720.6" y="886.2" width="1.9" height="2.4" fill="#0d2340"/>
<path d="M707.4,877.6L718.6,887.4" stroke="#fff" stroke-width="1.9" stroke-linecap="round"/><path d="M706.4,876.8L709.4,879.4" stroke="#6c7a92" stroke-width="2.2" stroke-linecap="round"/><circle cx="708.6" cy="873.8" r="1.2" fill="#e8f6ff"/><circle cx="714.4" cy="873.6" r="0.8" fill="#e8f6ff"/><circle cx="716.4" cy="878" r="0.8" fill="#e8f6ff"/>
<path d="M748.8,876.4L761,869.6L773.2,876.4V889H748.8Z" fill="#fff"/><path d="M750.6,877.2H771.4L762.6,881.6L768.4,886.4Z" fill="#0b1019"/>
<rect x="801" y="868" width="18" height="24" fill="#fff"/><rect x="803.2" y="870.4" width="13.6" height="3.2" fill="#0b1019"/>
<path d="M803.4,876.6h3.2l-3.2,3.2z" fill="#0b1019"/>
<path d="M808.4,876.6h3.2l-3.2,3.2z" fill="#0b1019"/>
<path d="M813.4,876.6h3.2l-3.2,3.2z" fill="#0b1019"/>
<path d="M803.4,881.5h3.2l-3.2,3.2z" fill="#0b1019"/>
<path d="M808.4,881.5h3.2l-3.2,3.2z" fill="#0b1019"/>
<path d="M813.4,881.5h3.2l-3.2,3.2z" fill="#0b1019"/>
<path d="M803.4,886.4h3.2l-3.2,3.2z" fill="#0b1019"/>
<path d="M808.4,886.4h3.2l-3.2,3.2z" fill="#0b1019"/>
<path d="M813.4,886.4h3.2l-3.2,3.2z" fill="#0b1019"/>
<path d="M858.8,880L849.10,874.40A11.2,11.2 0 0 1 868.50,874.40Z" fill="#db4437"/><path d="M858.8,880L868.50,874.40A11.2,11.2 0 0 1 858.80,891.20Z" fill="#ffcd40"/><path d="M858.8,880L858.80,891.20A11.2,11.2 0 0 1 849.10,874.40Z" fill="#0f9d58"/><path d="M868.50,874.40L858.80,874.85L863.26,877.42Z" fill="#db4437"/><path d="M858.80,891.20L863.26,882.58L858.80,885.15Z" fill="#ffcd40"/><path d="M849.10,874.40L854.34,882.58L854.34,877.42Z" fill="#0f9d58"/><circle cx="858.8" cy="880" r="5.15" fill="#f1f1f1"/><circle cx="858.8" cy="880" r="4.03" fill="#4285f4"/>
<rect x="839" y="897.4" width="39.799999999999955" height="1.6" fill="#7cc4f5"/>
<rect x="897.9" y="869.7" width="19.6" height="18.4" fill="#0e1024" stroke="#27c6fb" stroke-width="1.5"/>
<text x="907.8" y="884" font-family="'Liberation Sans', sans-serif" font-size="13" font-weight="normal" fill="#2fc4f7" text-anchor="middle" textLength="13" lengthAdjust="spacingAndGlyphs" >Ps</text>
<path d="M946.4,889.8L948.6,883.6L953.4,887.8Z" fill="#fff"/><circle cx="957" cy="879.4" r="10.6" fill="#fff"/><circle cx="957" cy="879.4" r="9.3" fill="#2cb742"/><path d="M948.2,888.2L949.8,884L952.6,886.6Z" fill="#2cb742"/><path d="M952.6,875.2 C952,879 957,884.6 961.8,884.4 L962.6,882.4 L960.2,881 L959,882.2 C957.4,881.6 955.6,879.6 955.2,878.2 L956.2,877 L955,874.6Z" fill="#fff"/>
<rect x="937" y="897.4" width="40" height="1.6" fill="#7cc4f5"/>
<ellipse cx="1005.6" cy="878.6" rx="11.2" ry="5.2" transform="rotate(-20 1005.6 878.6)" fill="#8a8a8a"/><ellipse cx="1006.2" cy="876.2" rx="11.2" ry="5.4" transform="rotate(-20 1006.2 876.2)" fill="#f7f7f7" stroke="#d8352e" stroke-width="1.1"/><path d="M1001.6,875.4L1011.2,882.6M1007.4,873L1008.8,883" stroke="#8d8d8d" stroke-width="0.9"/><ellipse cx="1009.6" cy="886.6" rx="1.7" ry="3.1" transform="rotate(25 1009.6 886.6)" fill="none" stroke="#2e97e0" stroke-width="1.2"/><ellipse cx="1014.4" cy="884.4" rx="1.7" ry="3.1" transform="rotate(-55 1014.4 884.4)" fill="none" stroke="#2e97e0" stroke-width="1.2"/>
<defs><radialGradient id="ffg" cx="0.7" cy="0.2" r="0.9"><stop offset="0" stop-color="#fff36b"/><stop offset="0.35" stop-color="#ffbd2f"/><stop offset="0.7" stop-color="#ff6a2a"/><stop offset="1" stop-color="#e31587"/></radialGradient></defs>
<circle cx="1055" cy="880.4" r="10.8" fill="url(#ffg)"/><path d="M1058,868.2 C1064,870 1067,876 1065.6,882 C1064,875 1060,873 1058,868.2Z" fill="#ffe14d"/><path d="M1045,872 L1047.6,869.4 C1047.8,871.4 1049,872.6 1050.6,873.4Z" fill="#ff7a2a"/><circle cx="1055.4" cy="879.4" r="5.6" fill="#2b54c9"/><path d="M1050,878 C1053,876.4 1055,877.4 1056.6,879.4 C1054.6,879.6 1053.6,881 1055,882.6 C1057,884.2 1060,883 1061,880.4 C1061.6,885 1057,888 1052.6,886 C1049,884 1048.6,880 1050,878Z" fill="#ff9a1f"/>
<path d="M1103.9,868.6 L1109.4,885 H1098.4Z" fill="#f68b0c"/><path d="M1098.4,883.2H1109.4L1113.6,889.4Q1113.8,890.6 1112.4,890.6H1095.4Q1094,890.6 1094.2,889.4Z" fill="#f68b0c"/><path d="M1102.3,873.4H1105.5L1106.6,876.6H1101.2Z M1100.2,879.6H1107.6L1108.6,882.6H1099.2Z" fill="#f1f1f1"/>
<rect x="1141" y="868" width="24" height="24" fill="#0a78d7"/><circle cx="1153" cy="880" r="7.4" fill="#1b9aa0"/><circle cx="1150.3" cy="880" r="2.1" fill="none" stroke="#fff" stroke-width="1.1"/><circle cx="1155.7" cy="880" r="2.1" fill="none" stroke="#fff" stroke-width="1.1"/>
<rect x="1190" y="868" width="24" height="24" fill="#5aab46"/><path d="M1198,868 C1199,876 1203,881 1206,884 L1209,884 C1212,880 1213.6,874 1213.8,868Z" fill="#8cc97a" opacity=".75"/><path d="M1201,868L1205,883M1205.6,868L1207,883M1210,868L1209,883" stroke="#c6e6ba" stroke-width="0.8" opacity=".8"/><rect x="1205.6" y="884.6" width="3.6" height="2.4" fill="#c6e6ba"/><path d="M1190,873.6 L1192.6,871.4 L1203,884.8 L1204.6,890.4 L1199.4,888 L1190,876.6Z" fill="#fff"/>
<rect x="1182" y="897.4" width="40" height="1.6" fill="#7cc4f5"/>
<polygon points="1239,870.6 1263.2,870.2 1251,874" fill="#b8e5f7"/><polygon points="1239,870.6 1251,874 1251,889.4" fill="#17a5dc"/><polygon points="1263.2,870.2 1251,874 1251,889.4" fill="#0f6d96"/>
<rect x="1231" y="897.4" width="40" height="1.6" fill="#7cc4f5"/>
<rect x="1276" y="860" width="47.8" height="39" fill="#3b3f46"/>
<rect x="1276" y="897.4" width="47.799999999999955" height="1.6" fill="#7cc4f5"/>
<path d="M1289.4,872.4L1306.6,873.4V887.6L1289.4,888.8Z" fill="#7db4dc"/><path d="M1303,872.2L1308.6,873.6V887L1303,888.4Z" fill="#a7cfea"/><circle cx="1297.2" cy="880.6" r="6.9" fill="#f47b20"/><circle cx="1297.2" cy="880.6" r="6.9" fill="none" stroke="#f9a45c" stroke-width="0.8"/><path d="M1294.8,876.8L1301.6,880.6L1294.8,884.4Z" fill="#fff"/>
<circle cx="1366.4" cy="874.9" r="2.5" fill="none" stroke="#fff" stroke-width="1.1"/><path d="M1362.6,881 C1363,877.6 1369.8,877.6 1370.2,881" fill="none" stroke="#fff" stroke-width="1.1"/><circle cx="1359.7" cy="881" r="3.4" fill="#0b1019"/><circle cx="1359.7" cy="881" r="2.6" fill="none" stroke="#fff" stroke-width="1.1"/><path d="M1355.6,887.4 C1356,883.6 1363.4,883.6 1363.8,887.4" fill="none" stroke="#fff" stroke-width="1.1"/>
<path d="M1393.2,882.8L1399,877L1404.8,882.8" fill="none" stroke="#fff" stroke-width="1.2"/>
<path d="M1416.2,874.2V876.4M1418.6,874.2V876.4M1415,876.6H1419.8V878.6Q1419.8,880.6 1417.4,880.8V884.8" fill="none" stroke="#fff" stroke-width="1.1"/><rect x="1419.6" y="876.9" width="10.2" height="7.6" fill="none" stroke="#fff" stroke-width="1.1"/><rect x="1430.2" y="879" width="1.2" height="3.4" fill="#fff"/><path d="M1421.8,877.6H1428.8V883.8H1420.2V880Z" fill="#fff"/>
<circle cx="1452.2" cy="885.2" r="1.3" fill="#fff"/><path d="M1448,885.8A4.4,4.4 0 0 1 1452.6,881.2M1445.2,885.8A7.2,7.2 0 0 1 1452.6,878.4M1442.4,885.8A10,10 0 0 1 1452.6,875.6" fill="none" stroke="#fff" stroke-width="1.1"/>
<path d="M1463.4,877.6H1465.6L1468.6,874.4V885.6L1465.6,882.4H1463.4Z" fill="none" stroke="#fff" stroke-width="1.1" stroke-linejoin="round"/><path d="M1471,877.6Q1472.6,880 1471,882.4M1473.4,875.8Q1476.2,880 1473.4,884.2M1475.8,874Q1479.8,880 1475.8,886" fill="none" stroke="#fff" stroke-width="1.1"/>
<text x="1515.6" y="874.6" font-family="'Liberation Sans', sans-serif" font-size="12" font-weight="normal" fill="#fff" text-anchor="middle" textLength="41" lengthAdjust="spacingAndGlyphs" >1:29 PM</text>
<text x="1515.2" y="892.4" font-family="'Liberation Sans', sans-serif" font-size="12" font-weight="normal" fill="#fff" text-anchor="middle" textLength="46" lengthAdjust="spacingAndGlyphs" >5/7/2019</text>
<path d="M1560,872.4H1575.6V884H1565.4L1562.6,887V884H1560Z" fill="#fff"/><path d="M1562.4,875.6H1573.2M1562.4,878.2H1573.2M1562.4,880.8H1569" stroke="#0b1019" stroke-width="1"/><circle cx="1574" cy="887" r="7.2" fill="#2a2e36" stroke="#0b1019" stroke-width="1"/><circle cx="1574" cy="887" r="6.4" fill="none" stroke="#6f747c" stroke-width="0.8"/>
<text x="1574" y="891" font-family="'Liberation Sans', sans-serif" font-size="11" font-weight="bold" fill="#fff" text-anchor="middle" >2</text>
<rect x="1594.6" y="860" width="1" height="39" fill="#5a5f66"/>
</svg>
</body></html>
